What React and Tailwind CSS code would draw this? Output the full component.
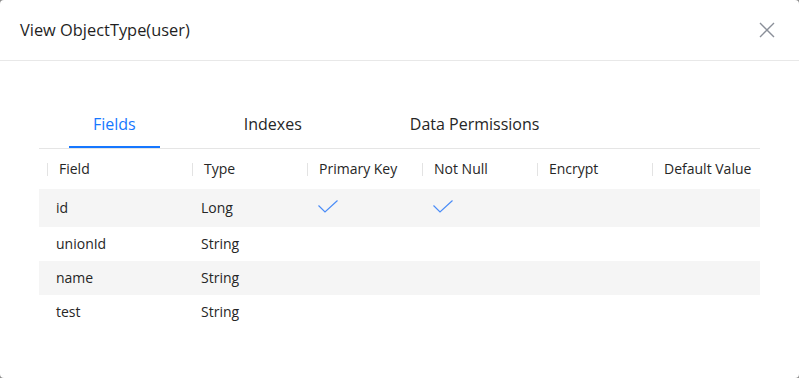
import React from 'react';

const columns = [
  { title: 'Field', w: 'w-[145px]' },
  { title: 'Type', w: 'w-[115px]' },
  { title: 'Primary Key', w: 'w-[115px]' },
  { title: 'Not Null', w: 'w-[115px]' },
  { title: 'Encrypt', w: 'w-[115px]' },
  { title: 'Default Value', w: 'w-[115px]' },
];

const rows = [
  { field: 'id', type: 'Long', pk: true, nn: true },
  { field: 'unionId', type: 'String' },
  { field: 'name', type: 'String' },
  { field: 'test', type: 'String' },
];

function Check() {
  return (
    <svg width="20" height="13" viewBox="0 0 20 13" fill="none" className="-mt-[3px]">
      <path d="M0.5 5.5 L7 12 L19.5 0.5" stroke="#4a8cf7" strokeWidth="1.2" />
    </svg>
  );
}

function Close() {
  return (
    <svg width="16" height="16" viewBox="0 0 16 16" fill="none">
      <path d="M1 1 L15 15 M15 1 L1 15" stroke="#8a8f99" strokeWidth="1.4" />
    </svg>
  );
}

export default function App() {
  return (
    <div className="w-[799px] h-[378px] bg-[#8c8c8c] font-['Open_Sans',Arial,sans-serif]">
      <div className="w-full h-full bg-white rounded-[4px] overflow-hidden">
        {/* Header */}
        <div className="h-[61px] flex items-center justify-between pl-5 pr-[24px] border-b border-[#e8e8e8]">
          <span className="text-[16.4px] text-[#1f1f1f]">View ObjectType(user)</span>
          <Close />
        </div>

        <div className="px-[39px] pt-[50px]">
          {/* Tabs */}
          <div className="flex border-b border-[#e5e5e5] h-[38px]">
            {['Fields', 'Indexes', 'Data Permissions'].map((t, i) => (
              <div
                key={t}
                className={`mx-[30px] px-[24px] flex items-center text-[16px] h-full ${
                  i === 0 ? 'text-[#1677ff] border-b-2 border-[#1677ff]' : 'text-[#262626] border-b-2 border-transparent'
                }`}
              >
                <span className="-mt-[9px]">{t}</span>
              </div>
            ))}
          </div>

          {/* Table header */}
          <div className="flex h-[40px] items-center text-[14px] text-[#262626]">
            {columns.map((c) => (
              <div key={c.title} className={`${c.w} flex items-center pl-[8px]`}>
                <span className="w-px h-[13px] bg-[#e3e3e3]" />
                <span className="pl-[11px] -mt-[2px]">{c.title}</span>
              </div>
            ))}
          </div>

          {/* Rows */}
          {rows.map((r, i) => (
            <div
              key={r.field}
              className={`flex items-center text-[14px] text-[#262626] ${i === 0 ? 'h-[38px]' : 'h-[34px]'} ${
                i % 2 === 0 ? 'bg-[#f5f5f5]' : 'bg-white'
              }`}
            >
              <div className="w-[145px] pl-[17px] -mt-[2px]">{r.field}</div>
              <div className="w-[115px] pl-[17px] -mt-[2px]">{r.type}</div>
              <div className="w-[115px] pl-[19px] flex items-center">{r.pk && <Check />}</div>
              <div className="w-[115px] pl-[19px] flex items-center">{r.nn && <Check />}</div>
              <div className="w-[115px]" />
              <div className="w-[115px]" />
            </div>
          ))}
        </div>
      </div>
    </div>
  );
}
